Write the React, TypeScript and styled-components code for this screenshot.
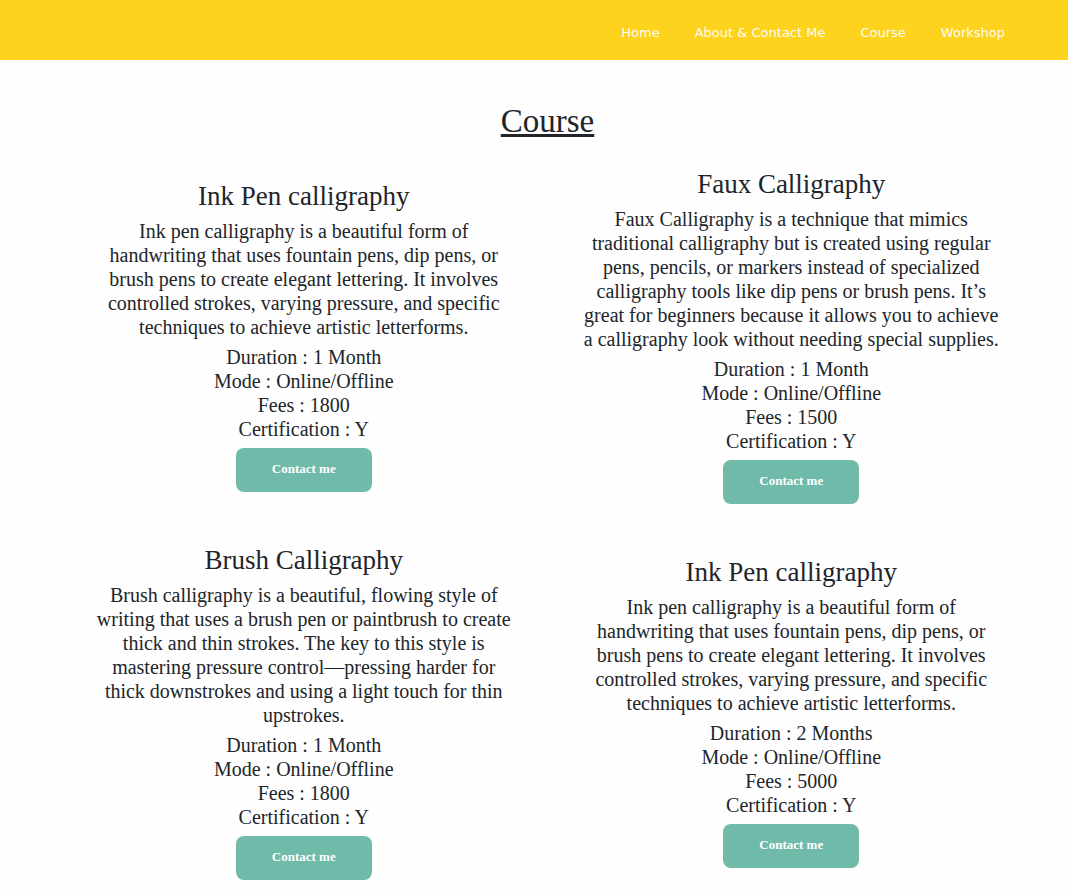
import React from "react";
import styled, { createGlobalStyle } from "styled-components";

const GlobalStyle = createGlobalStyle`
  *, *::before, *::after { box-sizing: border-box; }
  body {
    margin: 0;
    background: #fefefe;
    color: #212529;
    font-family: "Liberation Serif", "Times New Roman", serif;
    font-size: 20px;
    line-height: 24px;
  }
`;

const Header = styled.header`
  background: #fdd31d;
  height: 60px;
`;

const Nav = styled.nav`
  display: flex;
  justify-content: flex-end;
  align-items: center;
  gap: 35px;
  height: 100%;
  padding: 6px 63px 0 20px;
`;

const NavLink = styled.a`
  color: #fffcf5;
  font-family: "DejaVu Sans", Verdana, sans-serif;
  font-size: 13px;
  line-height: 20px;
  text-decoration: none;
`;

const Main = styled.main`
  padding: 41px 33px 16px 60px;
`;

const Title = styled.h1`
  margin: 0 0 27px;
  font-size: 33px;
  font-weight: 400;
  line-height: 40px;
  text-align: center;
  text-decoration: underline;
  text-decoration-thickness: 3px;
`;

const CourseGrid = styled.div`
  display: grid;
  grid-template-columns: repeat(2, minmax(0, 1fr));
  align-items: center;
  row-gap: 40px;
`;

const Card = styled.article`
  display: flex;
  flex-direction: column;
  align-items: center;
  padding: 0 30px;
  text-align: center;
`;

const CardTitle = styled.h2`
  margin: 0 0 7px;
  font-size: 27px;
  font-weight: 400;
  line-height: 32px;
`;

const Description = styled.p`
  margin: 0 0 6px;
`;

const Details = styled.ul`
  margin: 0 0 7px;
  padding: 0;
  list-style: none;
`;

const ContactButton = styled.button`
  width: 136px;
  height: 44px;
  padding: 0 0 2px;
  border: 0;
  border-radius: 8px;
  background: #6fbaa8;
  color: #ffffff;
  font-family: inherit;
  font-size: 13px;
  font-weight: 700;
  cursor: pointer;
`;

interface Course {
  name: string;
  description: string;
  duration: string;
  fees: number;
}

const inkPen =
  "Ink pen calligraphy is a beautiful form of handwriting that uses fountain pens, dip pens, or brush pens to create elegant lettering. It involves controlled strokes, varying pressure, and specific techniques to achieve artistic letterforms.";

const courses: Course[] = [
  { name: "Ink Pen calligraphy", description: inkPen, duration: "1 Month", fees: 1800 },
  {
    name: "Faux Calligraphy",
    description:
      "Faux Calligraphy is a technique that mimics traditional calligraphy but is created using regular pens, pencils, or markers instead of specialized calligraphy tools like dip pens or brush pens. It’s great for beginners because it allows you to achieve a calligraphy look without needing special supplies.",
    duration: "1 Month",
    fees: 1500,
  },
  {
    name: "Brush Calligraphy",
    description:
      "Brush calligraphy is a beautiful, flowing style of writing that uses a brush pen or paintbrush to create thick and thin strokes. The key to this style is mastering pressure control—pressing harder for thick downstrokes and using a light touch for thin upstrokes.",
    duration: "1 Month",
    fees: 1800,
  },
  { name: "Ink Pen calligraphy", description: inkPen, duration: "2 Months", fees: 5000 },
];

const links = ["Home", "About & Contact Me", "Course", "Workshop"];

export default function App() {
  return (
    <>
      <GlobalStyle />
      <Header>
        <Nav>
          {links.map((label) => (
            <NavLink key={label} href="#">
              {label}
            </NavLink>
          ))}
        </Nav>
      </Header>
      <Main>
        <Title>Course</Title>
        <CourseGrid>
          {courses.map((course, i) => (
            <Card key={i}>
              <CardTitle>{course.name}</CardTitle>
              <Description>{course.description}</Description>
              <Details>
                <li>{`Duration : ${course.duration}`}</li>
                <li>Mode : Online/Offline</li>
                <li>{`Fees : ${course.fees}`}</li>
                <li>Certification : Y</li>
              </Details>
              <ContactButton type="button">Contact me</ContactButton>
            </Card>
          ))}
        </CourseGrid>
      </Main>
    </>
  );
}
